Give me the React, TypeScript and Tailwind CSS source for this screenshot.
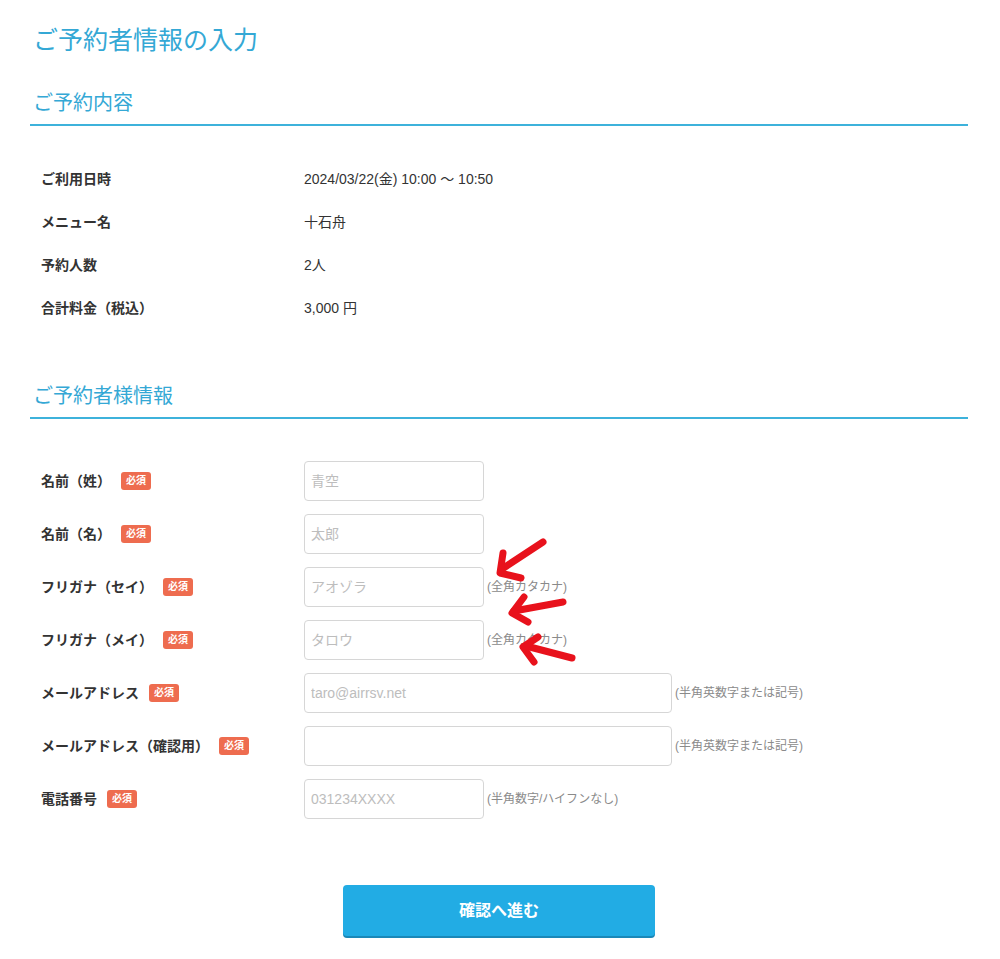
import React from 'react';

const FONT = { fontFamily: '"Liberation Sans", "Noto Sans CJK JP", sans-serif' };

const summary = [
  { label: 'ご利用日時', value: '2024/03/22(金) 10:00 〜 10:50' },
  { label: 'メニュー名', value: '十石舟' },
  { label: '予約人数', value: '2人' },
  { label: '合計料金（税込）', value: '3,000 円' },
];

interface FieldRow {
  label: string;
  placeholder: string;
  wide?: boolean;
  hint?: string;
}

const fields: FieldRow[] = [
  { label: '名前（姓）', placeholder: '青空' },
  { label: '名前（名）', placeholder: '太郎' },
  { label: 'フリガナ（セイ）', placeholder: 'アオゾラ', hint: '(全角カタカナ)' },
  { label: 'フリガナ（メイ）', placeholder: 'タロウ', hint: '(全角カタカナ)' },
  { label: 'メールアドレス', placeholder: 'taro@airrsv.net', wide: true, hint: '(半角英数字または記号)' },
  { label: 'メールアドレス（確認用）', placeholder: '', wide: true, hint: '(半角英数字または記号)' },
  { label: '電話番号', placeholder: '031234XXXX', hint: '(半角数字/ハイフンなし)' },
];

const SectionHeading: React.FC<{ children: React.ReactNode }> = ({ children }) => (
  <h2 className="border-b-2 border-[#3db2db] pb-[6px] pl-[3px] text-[20px] leading-[30px] text-[#34a8d5]">
    {children}
  </h2>
);

const Required = () => (
  <span className="inline-flex h-[18px] items-center rounded-[3px] bg-[#ee6c4f] px-[5px] text-[10px] font-bold leading-none text-white">
    必須
  </span>
);

export default function App() {
  return (
    <div className="relative min-h-[959px] w-[1000px] bg-white text-[#333]" style={FONT}>
      <div className="ml-[30px] w-[938px] pt-[21px]">
        <h1 className="pl-[3px] text-[25px] leading-[38px] text-[#34a8d5]">ご予約者情報の入力</h1>

        <div className="mt-[29px]">
          <SectionHeading>ご予約内容</SectionHeading>
          <div className="mt-[32px] pl-[11px]">
            {summary.map((row) => (
              <div key={row.label} className="flex h-[43px] items-center text-[14px]">
                <div className="w-[263px] font-bold">{row.label}</div>
                <div>{row.value}</div>
              </div>
            ))}
          </div>
        </div>

        <div className="mt-[51px]">
          <SectionHeading>ご予約者様情報</SectionHeading>
          <div className="mt-[42px] flex flex-col gap-[13px] pl-[11px]">
            {fields.map((f) => (
              <div key={f.label} className="flex h-[40px] items-center">
                <div className="flex w-[263px] items-center gap-[10px] text-[14px] font-bold">
                  <span>{f.label}</span>
                  <Required />
                </div>
                <input
                  placeholder={f.placeholder}
                  className={`${f.wide ? 'w-[368px]' : 'w-[180px]'} h-[40px] rounded-[4px] border border-[#d6d6d6] px-[6px] text-[14px] outline-none placeholder:text-[#bdbdbd]`}
                  style={FONT}
                />
                {f.hint && <span className="ml-[3px] text-[12px] text-[#8a8a8a]">{f.hint}</span>}
              </div>
            ))}
          </div>
        </div>

        <div className="mt-[66px] flex justify-center">
          <button
            className="h-[51px] w-[312px] rounded-[4px] bg-[#22ace4] text-[16px] font-bold text-white shadow-[0_2px_0_#1b88b8]"
            style={FONT}
          >
            確認へ進む
          </button>
        </div>
      </div>

      {/* red annotation arrows */}
      <svg
        className="pointer-events-none absolute left-0 top-0"
        width="1000"
        height="959"
        viewBox="0 0 1000 959"
        fill="none"
        stroke="#e8121c"
        strokeWidth="7"
        strokeLinecap="round"
        strokeLinejoin="round"
      >
        <path d="M543 542 L502 569" />
        <path d="M503 553 L500 573 L521 578" />
        <path d="M563 602 L514 611" />
        <path d="M524 597 L512 613 L528 622" />
        <path d="M572 658 L526 646" />
        <path d="M538 637 L523 647 L534 662" />
      </svg>
    </div>
  );
}
